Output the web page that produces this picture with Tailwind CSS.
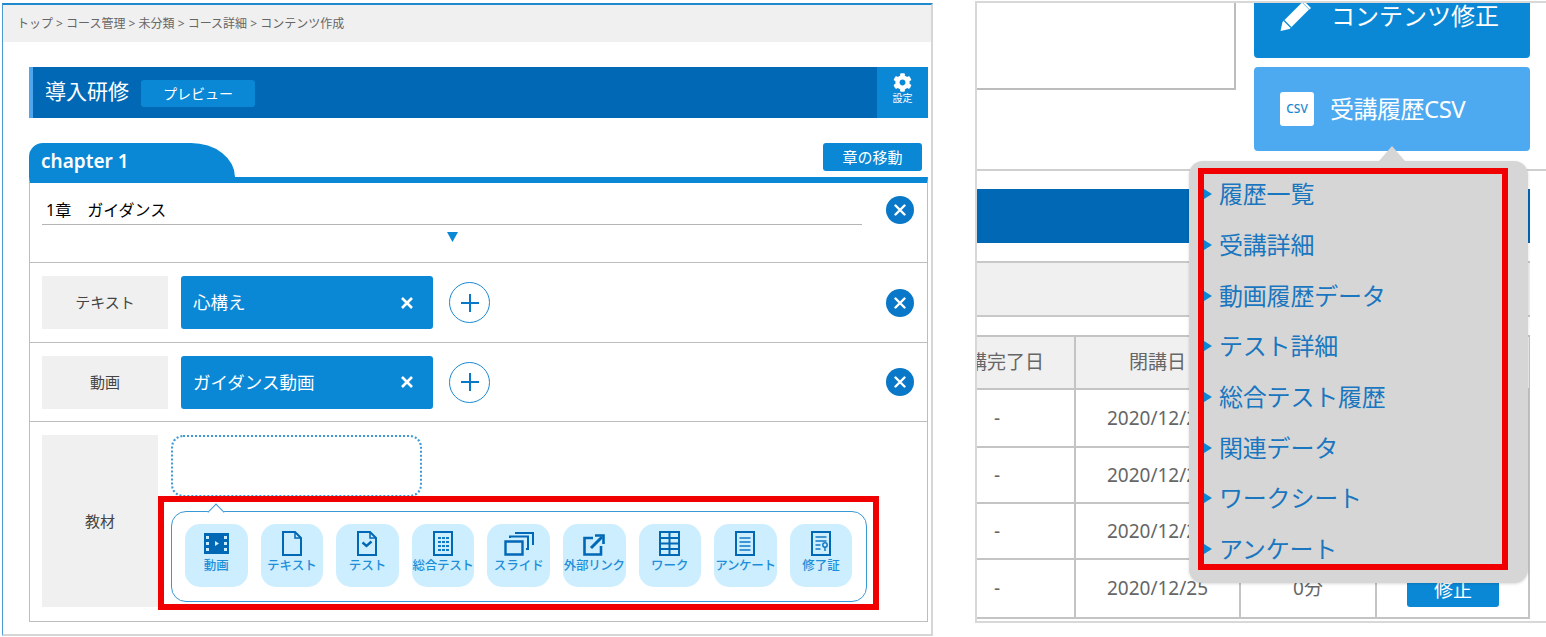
<!DOCTYPE html>
<html lang="ja">
<head>
<meta charset="utf-8">
<script src="https://cdn.jsdelivr.net/npm/@tailwindcss/browser@4"></script>
<title>コンテンツ作成</title>
</head>
<body class="bg-white">
<div class="flex items-start w-[1546px] h-[637px] overflow-hidden bg-white font-['Noto_Sans','Noto_Sans_CJK_JP',sans-serif]">

  <!-- left panel -->
  <section class="ml-[2px] mt-[3px] w-[931px] h-[633px] shrink-0 border-t-2 border-t-[#2088cc] border-l border-l-[#4a9ad4] border-r-2 border-r-[#d6d6d6] border-b-2 border-b-[#d6d6d6]">
    <div class="h-[37px] bg-[#f0f0f0] pl-[14px] flex items-center text-[12px] text-[#666]">トップ &gt; コース管理 &gt; 未分類 &gt; コース詳細 &gt; コンテンツ作成</div>
    <div class="pl-[26px] pr-[3px]">
      <div class="mt-[25px] h-[51px] flex bg-[#0068b5] border-l-4 border-l-[#4da6ee]">
        <div class="flex-1 flex items-center pl-[12px] pb-[2px] gap-[12px]">
          <span class="text-[21px] text-white leading-none">導入研修</span>
          <span class="w-[114px] h-[27px] mt-[3px] rounded-[3px] bg-[#0a88d6] text-white text-[14px] flex items-center justify-center">プレビュー</span>
        </div>
        <div class="w-[51px] bg-[#0a88d6] flex flex-col items-center pt-[6px] text-white">
          <svg viewBox="0 0 512 512" class="w-[19px] h-[19px]" fill="#fff"><path d="M487.4 315.7l-42.6-24.6c4.3-23.2 4.3-47 0-70.2l42.6-24.6c4.9-2.8 7.1-8.6 5.5-14-11.1-35.6-30-67.8-54.7-94.6-3.8-4.1-10-5.1-14.8-2.3L380.8 110c-17.9-15.4-38.5-27.3-60.8-35.1V25.8c0-5.6-3.9-10.5-9.4-11.7-36.7-8.2-74.3-7.8-109.2 0-5.5 1.2-9.4 6.1-9.4 11.7V75c-22.2 7.9-42.8 19.8-60.8 35.1L88.7 85.5c-4.9-2.8-11-1.9-14.8 2.3-24.7 26.7-43.6 58.9-54.7 94.6-1.7 5.4.6 11.2 5.5 14L67.3 221c-4.3 23.2-4.3 47 0 70.2l-42.6 24.6c-4.9 2.8-7.1 8.6-5.5 14 11.1 35.6 30 67.8 54.7 94.6 3.8 4.1 10 5.1 14.8 2.3l42.6-24.6c17.9 15.4 38.5 27.3 60.8 35.1v49.2c0 5.6 3.9 10.5 9.4 11.7 36.7 8.2 74.3 7.8 109.2 0 5.5-1.2 9.4-6.1 9.4-11.7v-49.2c22.2-7.9 42.8-19.8 60.8-35.1l42.6 24.6c4.9 2.8 11 1.9 14.8-2.3 24.7-26.7 43.6-58.9 54.7-94.6 1.5-5.5-.7-11.3-5.6-14.1zM256 336c-44.1 0-80-35.9-80-80s35.9-80 80-80 80 35.9 80 80-35.9 80-80 80z"/></svg>
          <span class="text-[10px] leading-[13px]">設定</span>
        </div>
      </div>

      <div class="mt-[25px] h-[34px] flex justify-between items-start">
        <div class="w-[206px] h-[34px] bg-[#0a88d6] rounded-tl-[14px] rounded-tr-[44px_34px] text-white text-[19px] font-semibold pl-[12px] flex items-center pt-[2px]">chapter 1</div>
        <div class="mr-[6px] w-[99px] h-[28px] bg-[#0a88d6] rounded-[3px] text-white text-[15px] flex items-center justify-center">章の移動</div>
      </div>

      <div class="border-t-[6px] border-t-[#0a88d6] border-x border-x-[#bdbdbd] border-b border-b-[#bdbdbd]">
        <!-- chapter title -->
        <div class="h-[80px] border-b border-b-[#bdbdbd] flex pl-[12px] pr-[13px] pt-[14px]">
          <div class="w-[820px]">
            <div class="h-[28px] border-b border-b-[#b5b5b5] text-[16px] text-black leading-[27px] pl-[4px]">1章　ガイダンス</div>
            <div class="flex justify-center pt-[7px]"><svg viewBox="0 0 11 10" class="w-[11px] h-[10px]"><path d="M0 0h11L5.5 10z" fill="#0a88d6"/></svg></div>
          </div>
          <div class="ml-auto -mt-[1px] w-[28px] h-[28px] rounded-full bg-[#0a78c8] flex items-center justify-center">
            <svg viewBox="0 0 12 12" class="w-[12px] h-[12px]"><path d="M1.5 1.5l9 9M10.5 1.5l-9 9" stroke="#fff" stroke-width="2.4" stroke-linecap="round"/></svg>
          </div>
        </div>
        <!-- text row -->
        <div class="h-[80px] border-b border-b-[#bdbdbd] flex items-center pl-[12px] pr-[13px]">
          <div class="w-[126px] h-[53px] bg-[#f0f0f0] text-[15px] text-[#444] flex items-center justify-center">テキスト</div>
          <div class="ml-[13px] w-[252px] h-[53px] bg-[#0a88d6] rounded-[3px] flex items-center justify-between pl-[12px] pr-[20px] text-white text-[17.5px]">
            <span>心構え</span>
            <svg viewBox="0 0 12 12" class="w-[12px] h-[12px]"><path d="M1 1l10 10M11 1L1 11" stroke="#fff" stroke-width="2.6"/></svg>
          </div>
          <div class="ml-[16px] w-[41px] h-[41px] rounded-full border-[1.5px] border-[#1a88d0] bg-white flex items-center justify-center">
            <svg viewBox="0 0 20 20" class="w-[20px] h-[20px]"><path d="M10 1v18M1 10h18" stroke="#0a78c8" stroke-width="2"/></svg>
          </div>
          <div class="ml-auto w-[28px] h-[28px] rounded-full bg-[#0a78c8] flex items-center justify-center">
            <svg viewBox="0 0 12 12" class="w-[12px] h-[12px]"><path d="M1.5 1.5l9 9M10.5 1.5l-9 9" stroke="#fff" stroke-width="2.4" stroke-linecap="round"/></svg>
          </div>
        </div>
        <!-- video row -->
        <div class="h-[79px] border-b border-b-[#bdbdbd] flex items-center pl-[12px] pr-[13px]">
          <div class="w-[126px] h-[53px] bg-[#f0f0f0] text-[15px] text-[#444] flex items-center justify-center">動画</div>
          <div class="ml-[13px] w-[252px] h-[53px] bg-[#0a88d6] rounded-[3px] flex items-center justify-between pl-[12px] pr-[20px] text-white text-[17.5px]">
            <span>ガイダンス動画</span>
            <svg viewBox="0 0 12 12" class="w-[12px] h-[12px]"><path d="M1 1l10 10M11 1L1 11" stroke="#fff" stroke-width="2.6"/></svg>
          </div>
          <div class="ml-[16px] w-[41px] h-[41px] rounded-full border-[1.5px] border-[#1a88d0] bg-white flex items-center justify-center">
            <svg viewBox="0 0 20 20" class="w-[20px] h-[20px]"><path d="M10 1v18M1 10h18" stroke="#0a78c8" stroke-width="2"/></svg>
          </div>
          <div class="ml-auto w-[28px] h-[28px] rounded-full bg-[#0a78c8] flex items-center justify-center">
            <svg viewBox="0 0 12 12" class="w-[12px] h-[12px]"><path d="M1.5 1.5l9 9M10.5 1.5l-9 9" stroke="#fff" stroke-width="2.4" stroke-linecap="round"/></svg>
          </div>
        </div>
        <!-- materials row -->
        <div class="relative h-[199px] flex pl-[12px] pt-[13px]">
          <div class="w-[116px] h-[172px] bg-[#f0f0f0] text-[15px] text-[#444] flex items-center justify-center">教材</div>
          <div class="ml-[13px]">
            <div class="w-[251px] h-[62px] border-2 border-dotted border-[#3f9ad6] rounded-[12px]"></div>
            <div class="relative mt-[14px] w-[696px] h-[91px] border-[1.5px] border-[#3a98d4] rounded-[15px] bg-white flex gap-[13px] pl-[13px] pt-[12px]">
              <div class="absolute -top-[6px] left-[38px] w-[12px] h-[12px] rotate-45 bg-white border-l-[1.5px] border-t-[1.5px] border-[#3a98d4]"></div>

              <div class="w-[62.6px] h-[63px] rounded-[15px] bg-[#cdeeff] flex flex-col items-center pt-[6px] text-[#1f8ed8]">
                <svg viewBox="0 0 25 21" class="w-[25px] h-[21px] mt-[3px] mb-[2px]"><path fill="#0068b5" d="M0 0h25v21H0z"/><path fill="#cdeeff" d="M2 3h3v3H2zM2 9h3v3H2zM2 15h3v3H2zM20 3h3v3h-3zM20 9h3v3h-3zM20 15h3v3h-3zM11 8l4 2.5-4 2.5z"/></svg>
                <span class="text-[12.5px] leading-[20px] font-medium whitespace-nowrap">動画</span>
              </div>
              <div class="w-[62.6px] h-[63px] rounded-[15px] bg-[#cdeeff] flex flex-col items-center pt-[6px] text-[#1f8ed8]">
                <svg viewBox="0 0 20 25" class="w-[20px] h-[25px] mt-[1px] mb-[0px]" fill="none"><path d="M1 1h12l6 6v17H1z" stroke="#0068b5" stroke-width="2"/><path d="M13 1v6h6" stroke="#0068b5" stroke-width="1.5"/></svg>
                <span class="text-[12.5px] leading-[20px] font-medium whitespace-nowrap">テキスト</span>
              </div>
              <div class="w-[62.6px] h-[63px] rounded-[15px] bg-[#cdeeff] flex flex-col items-center pt-[6px] text-[#1f8ed8]">
                <svg viewBox="0 0 20 25" class="w-[20px] h-[25px] mt-[1px]" fill="none"><path d="M1 1h12l6 6v17H1z" stroke="#0068b5" stroke-width="2"/><path d="M13 1v6h6" stroke="#0068b5" stroke-width="1.5"/><path d="M5.5 11.5l4 3.5 5-4.5" stroke="#0068b5" stroke-width="2.4"/></svg>
                <span class="text-[12.5px] leading-[20px] font-medium whitespace-nowrap">テスト</span>
              </div>
              <div class="w-[62.6px] h-[63px] rounded-[15px] bg-[#cdeeff] flex flex-col items-center pt-[6px] text-[#1f8ed8]">
                <svg viewBox="0 0 20 25" class="w-[20px] h-[25px] mt-[1px]" fill="none"><path d="M1 1h18v23H1z" stroke="#0068b5" stroke-width="2"/><path d="M5 6h3v2H5zM9 6h3v2H9zM13 6h3v2h-3zM5 10h3v2H5zM9 10h3v2H9zM13 10h3v2h-3zM5 14h3v2H5zM9 14h3v2H9zM13 14h3v2h-3zM5 18h3v2H5zM9 18h3v2H9zM13 18h3v2h-3z" fill="#1279c4"/></svg>
                <span class="text-[12.5px] leading-[20px] font-medium whitespace-nowrap tracking-[-0.3px]">総合テスト</span>
              </div>
              <div class="w-[62.6px] h-[63px] rounded-[15px] bg-[#cdeeff] flex flex-col items-center pt-[6px] text-[#1f8ed8]">
                <svg viewBox="0 0 30 25" class="w-[30px] h-[25px] mt-[1px]" fill="none"><path d="M1.5 10.500h17v13h-17z" stroke="#0068b5" stroke-width="2.4"/><path d="M6 7V5.500h18V18h-2" stroke="#0068b5" stroke-width="2"/><path d="M11 2h18v12" stroke="#0068b5" stroke-width="2"/></svg>
                <span class="text-[12.5px] leading-[20px] font-medium whitespace-nowrap">スライド</span>
              </div>
              <div class="w-[62.6px] h-[63px] rounded-[15px] bg-[#cdeeff] flex flex-col items-center pt-[6px] text-[#1f8ed8]">
                <svg viewBox="0 0 22 22" class="w-[22px] h-[22px] mt-[4px]" fill="none"><path d="M10 4H1.500v16.500H18V12" stroke="#0068b5" stroke-width="2.6"/><path d="M8 14L19 3" stroke="#0068b5" stroke-width="3"/><path d="M12 1.500h8.500V10" stroke="#0068b5" stroke-width="2.600"/></svg>
                <span class="text-[12.5px] leading-[20px] font-medium whitespace-nowrap tracking-[-0.3px]">外部リンク</span>
              </div>
              <div class="w-[62.6px] h-[63px] rounded-[15px] bg-[#cdeeff] flex flex-col items-center pt-[6px] text-[#1f8ed8]">
                <svg viewBox="0 0 21 25" class="w-[21px] h-[25px] mt-[1px]" fill="none"><path d="M1 1h19v23H1zM1 7h19M1 12.500h19M1 18h19M10.500 1v23" stroke="#0068b5" stroke-width="2"/></svg>
                <span class="text-[12.5px] leading-[20px] font-medium whitespace-nowrap">ワーク</span>
              </div>
              <div class="w-[62.6px] h-[63px] rounded-[15px] bg-[#cdeeff] flex flex-col items-center pt-[6px] text-[#1f8ed8]">
                <svg viewBox="0 0 20 25" class="w-[20px] h-[25px] mt-[1px]" fill="none"><path d="M1 1h18v23H1z" stroke="#0068b5" stroke-width="2"/><path d="M4.500 7h11M4.500 11h11M4.500 15h11M4.500 19h11" stroke="#1279c4" stroke-width="1.600"/></svg>
                <span class="text-[12.5px] leading-[20px] font-medium whitespace-nowrap tracking-[-0.3px]">アンケート</span>
              </div>
              <div class="w-[62.6px] h-[63px] rounded-[15px] bg-[#cdeeff] flex flex-col items-center pt-[6px] text-[#1f8ed8]">
                <svg viewBox="0 0 20 25" class="w-[20px] h-[25px] mt-[1px]" fill="none"><path d="M1 1h18v23H1z" stroke="#0068b5" stroke-width="2"/><path d="M4.500 6h11M4.500 10h11M4.500 14h5M4.500 18h5" stroke="#1279c4" stroke-width="1.500"/><circle cx="14" cy="14" r="2.200" stroke="#1279c4" stroke-width="1.500"/><path d="M14 16v4" stroke="#1279c4" stroke-width="1.500"/></svg>
                <span class="text-[12.5px] leading-[20px] font-medium whitespace-nowrap">修了証</span>
              </div>
            </div>
          </div>
          <div class="absolute left-[128px] top-[74px] w-[721px] h-[114px] border-[6px] border-[#f00000]"></div>
        </div>
      </div>
    </div>
  </section>

  <!-- right panel -->
  <section class="relative ml-[42px] mt-[1px] w-[571px] h-[622px] shrink-0 border-t-2 border-l-2 border-b-2 border-[#d8d8d8] overflow-hidden">
    <div class="flex h-[148px] items-start">
      <div class="w-[259px] h-[87px] bg-white border-r-2 border-b-2 border-[#bcbcbc]"></div>
      <div class="ml-[18px] w-[276px] -mt-[29px] flex flex-col gap-[9px]">
        <div class="h-[84px] bg-[#0a88d6] rounded-[4px] flex items-center pl-[26px] gap-[19px] text-white text-[24px]">
          <svg viewBox="0 0 32 32" class="w-[32px] h-[32px] shrink-0"><path d="M0.500 31l2-9L22 2.500l7 7L9.500 29z" fill="#fff"/><path d="M24 1l7 7-1.500 1.500-7-7z" fill="#fff"/><path d="M4 20.500l7 7" stroke="#0a88d6" stroke-width="1.200"/></svg>
          <span>コンテンツ修正</span>
        </div>
        <div class="h-[84px] bg-[#4daaf0] rounded-[4px] flex items-center pl-[26px] gap-[16px] text-white text-[24px]">
          <span class="w-[34px] h-[34px] shrink-0 bg-white rounded-[3px] text-[#1a88d0] text-[12px] font-medium flex items-center justify-center">CSV</span>
          <span class="tracking-[-0.5px]">受講履歴CSV</span>
        </div>
      </div>
    </div>
    <div class="mt-[18px] h-[2px] bg-[#cfcfcf]"></div>
    <div class="mt-[18px] mr-[16px] h-[54px] bg-[#0068b5]"></div>
    <div class="mt-[18px] mr-[16px] h-[56px] bg-[#f0f0f0] border-y-2 border-[#c8c8c8]"></div>
    <div class="mt-[18px] mr-[16px] grid grid-cols-[99px_165px_136px_152px] grid-rows-[53px_58px_56px_56px_57px] border-t-2 border-b-2 border-r-2 border-[#c4c4c4] text-[#666] text-[19px]">
      <div class="bg-[#f0f0f0] border-b-2 border-r-2 border-[#c4c4c4] flex items-center justify-end pr-[30px] overflow-hidden whitespace-nowrap shrink-0"><span class="shrink-0">受講完了日</span></div>
      <div class="bg-[#f0f0f0] border-b-2 border-r-2 border-[#c4c4c4] flex items-center justify-center">閉講日</div>
      <div class="bg-[#f0f0f0] border-b-2 border-r-2 border-[#c4c4c4] flex items-center justify-center"></div>
      <div class="bg-[#f0f0f0] border-b-2 border-[#c4c4c4]"></div>

      <div class="border-b-2 border-r-2 border-[#c4c4c4] flex items-center pl-[17px]">-</div>
      <div class="border-b-2 border-r-2 border-[#c4c4c4] flex items-center justify-center">2020/12/25</div>
      <div class="border-b-2 border-r-2 border-[#c4c4c4]"></div>
      <div class="border-b-2 border-[#c4c4c4]"></div>

      <div class="border-b-2 border-r-2 border-[#c4c4c4] flex items-center pl-[17px]">-</div>
      <div class="border-b-2 border-r-2 border-[#c4c4c4] flex items-center justify-center">2020/12/25</div>
      <div class="border-b-2 border-r-2 border-[#c4c4c4]"></div>
      <div class="border-b-2 border-[#c4c4c4]"></div>

      <div class="border-b-2 border-r-2 border-[#c4c4c4] flex items-center pl-[17px]">-</div>
      <div class="border-b-2 border-r-2 border-[#c4c4c4] flex items-center justify-center">2020/12/25</div>
      <div class="border-b-2 border-r-2 border-[#c4c4c4]"></div>
      <div class="border-b-2 border-[#c4c4c4]"></div>

      <div class="border-r-2 border-[#c4c4c4] flex items-center pl-[17px]">-</div>
      <div class="border-r-2 border-[#c4c4c4] flex items-center justify-center">2020/12/25</div>
      <div class="border-r-2 border-[#c4c4c4] flex items-center justify-center">0分</div>
      <div class="flex items-center justify-center"><span class="w-[92px] h-[33px] mt-[4px] bg-[#0a88d6] rounded-[3px] text-white flex items-center justify-center">修正</span></div>
    </div>

    <!-- dropdown menu -->
    <div class="absolute left-[212px] top-[158px] w-[339px] h-[422px] rounded-[14px] bg-[#d6d6d6] shadow-[0_1px_3px_rgba(0,0,0,0.15)] pt-[8px] text-[#1a76bf] text-[24px]">
      <div class="absolute -top-[15px] left-[190px] w-0 h-0 border-x-[13px] border-x-transparent border-b-[15px] border-b-[#d6d6d6]"></div>
      <div class="h-[50.7px] flex items-center pl-[15px] gap-[7px] whitespace-nowrap"><svg viewBox="0 0 8 10" class="w-[8px] h-[10px]"><path d="M0 0l8 5-8 5z" fill="#0a88d6"/></svg><span class="leading-none tracking-[-0.2px]">履歴一覧</span></div>
      <div class="h-[50.7px] flex items-center pl-[15px] gap-[7px] whitespace-nowrap"><svg viewBox="0 0 8 10" class="w-[8px] h-[10px]"><path d="M0 0l8 5-8 5z" fill="#0a88d6"/></svg><span class="leading-none tracking-[-0.2px]">受講詳細</span></div>
      <div class="h-[50.7px] flex items-center pl-[15px] gap-[7px] whitespace-nowrap"><svg viewBox="0 0 8 10" class="w-[8px] h-[10px]"><path d="M0 0l8 5-8 5z" fill="#0a88d6"/></svg><span class="leading-none tracking-[-0.2px]">動画履歴データ</span></div>
      <div class="h-[50.7px] flex items-center pl-[15px] gap-[7px] whitespace-nowrap"><svg viewBox="0 0 8 10" class="w-[8px] h-[10px]"><path d="M0 0l8 5-8 5z" fill="#0a88d6"/></svg><span class="leading-none tracking-[-0.2px]">テスト詳細</span></div>
      <div class="h-[50.7px] flex items-center pl-[15px] gap-[7px] whitespace-nowrap"><svg viewBox="0 0 8 10" class="w-[8px] h-[10px]"><path d="M0 0l8 5-8 5z" fill="#0a88d6"/></svg><span class="leading-none tracking-[-0.2px]">総合テスト履歴</span></div>
      <div class="h-[50.7px] flex items-center pl-[15px] gap-[7px] whitespace-nowrap"><svg viewBox="0 0 8 10" class="w-[8px] h-[10px]"><path d="M0 0l8 5-8 5z" fill="#0a88d6"/></svg><span class="leading-none tracking-[-0.2px]">関連データ</span></div>
      <div class="h-[50.7px] flex items-center pl-[15px] gap-[7px] whitespace-nowrap"><svg viewBox="0 0 8 10" class="w-[8px] h-[10px]"><path d="M0 0l8 5-8 5z" fill="#0a88d6"/></svg><span class="leading-none tracking-[-0.2px]">ワークシート</span></div>
      <div class="h-[50.7px] flex items-center pl-[15px] gap-[7px] whitespace-nowrap"><svg viewBox="0 0 8 10" class="w-[8px] h-[10px]"><path d="M0 0l8 5-8 5z" fill="#0a88d6"/></svg><span class="leading-none tracking-[-0.2px]">アンケート</span></div>
      <div class="absolute left-[9px] top-[7px] w-[310px] h-[402px] border-[6px] border-[#f00000]"></div>
    </div>
  </section>
</div>
</body>
</html>
